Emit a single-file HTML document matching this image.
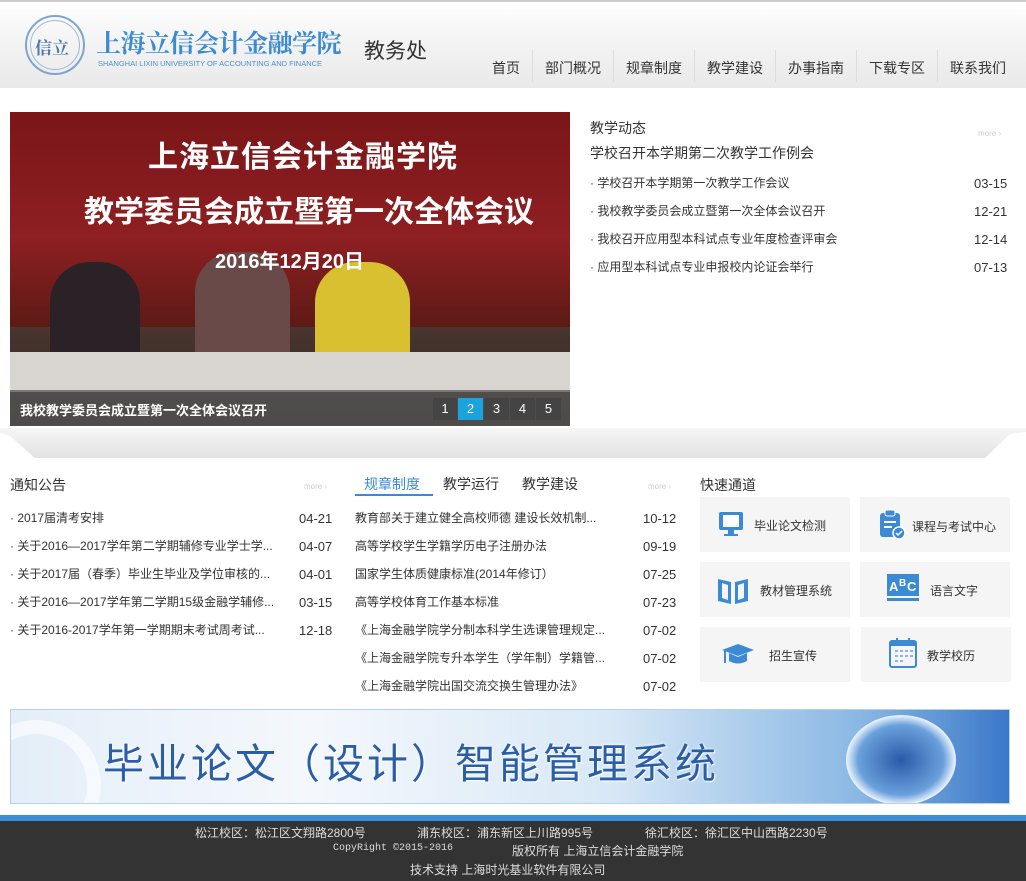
<!DOCTYPE html>
<html><head><meta charset="utf-8"><style>
*{margin:0;padding:0;box-sizing:border-box}
body{width:1026px;height:881px;overflow:hidden;background:#fff;font-family:"Liberation Sans","Noto Sans CJK SC",sans-serif;color:#333;position:relative}
.a{position:absolute}
.hdr{left:0;top:0;width:1026px;height:88px;background:linear-gradient(#fff,#f5f5f5 40%,#e9e9e9);border-top:2px solid #ccc}
.nav{top:58px;font-size:14px;color:#333}
.nav span{position:absolute;white-space:nowrap}
.sep{position:absolute;top:50px;width:1px;height:32px;background:#ddd}
.li{font-size:12px;white-space:nowrap}
.d{font-size:13px;white-space:nowrap;margin-top:2px}
.more{font-size:8px;color:#ccc}
.qb{background:#f5f5f5;width:150px;height:55px;font-size:12px;color:#333}
.qb span{position:absolute;top:20px}
</style></head><body>
<div class="a hdr"></div>
<div class="a" style="left:25px;top:15px;width:60px;height:60px;border-radius:50%;border:2px solid #7fa5cf;"></div>
<div class="a" style="left:30px;top:20px;width:50px;height:50px;border-radius:50%;border:1px solid #9bb8d9;"></div>
<div class="a" style="left:35px;top:34px;font-size:17px;color:#4a78b0;font-family:'Noto Serif CJK SC',serif;font-weight:bold">信立</div>
<div class="a" style="left:96px;top:27px;font-size:25px;line-height:30px;color:#3b8ad3;font-family:'Noto Serif CJK SC',serif;letter-spacing:-0.5px;font-weight:bold;white-space:nowrap">上海立信会计金融学院</div>
<div class="a" style="left:98px;top:59px;font-size:7.5px;color:#4a90d0;white-space:nowrap">SHANGHAI LIXIN UNIVERSITY OF ACCOUNTING AND FINANCE</div>
<div class="a" style="left:364px;top:35px;font-size:21px;color:#333">教务处</div>
<div class="a nav" style="left:0;top:0">
<span style="left:492px;top:58px">首页</span>
<span style="left:545px;top:58px">部门概况</span>
<span style="left:626px;top:58px">规章制度</span>
<span style="left:707px;top:58px">教学建设</span>
<span style="left:788px;top:58px">办事指南</span>
<span style="left:869px;top:58px">下载专区</span>
<span style="left:950px;top:58px">联系我们</span>
</div>
<div class="sep" style="left:532px"></div><div class="sep" style="left:613px"></div><div class="sep" style="left:694px"></div><div class="sep" style="left:775px"></div><div class="sep" style="left:856px"></div><div class="sep" style="left:937px"></div>

<div class="a" style="left:10px;top:112px;width:560px;height:314px;overflow:hidden;background:linear-gradient(#7a1618,#8e1f22 40%,#5a1a14 70%,#3a2a20)">
 <div class="a" style="left:0;top:215px;width:560px;height:100px;background:linear-gradient(#4a3530,#2a2520)"></div>
 <div class="a" style="left:40px;top:150px;width:90px;height:110px;border-radius:40px 40px 0 0;background:#2a2226"></div>
 <div class="a" style="left:185px;top:140px;width:95px;height:120px;border-radius:40px 40px 0 0;background:#6a4a48"></div>
 <div class="a" style="left:305px;top:150px;width:95px;height:110px;border-radius:40px 40px 0 0;background:#d8c030"></div>
 <div class="a" style="left:0;top:240px;width:560px;height:40px;background:#d8d4d0"></div>
 <div class="a" style="left:0;top:278px;width:560px;height:36px;background:rgba(90,90,90,.75)"></div>
 <div class="a" style="left:138px;top:20px;font-size:30px;color:#fff;font-weight:bold;font-family:'Noto Sans CJK SC',sans-serif;letter-spacing:1px">上海立信会计金融学院</div>
 <div class="a" style="left:74px;top:75px;font-size:30px;color:#fff;font-weight:bold;font-family:'Noto Sans CJK SC',sans-serif">教学委员会成立暨第一次全体会议</div>
 <div class="a" style="left:205px;top:133px;font-size:20px;color:#fff;font-weight:bold">2016年12月20日</div>
 <div class="a" style="left:10px;top:288px;font-size:13px;color:#fff;font-weight:bold">我校教学委员会成立暨第一次全体会议召开</div>
 <div class="a" style="left:423px;top:286px;display:flex;gap:1px;font-size:13px;color:#fff">
  <span style="width:24px;height:22px;background:#444;text-align:center;line-height:22px">1</span>
  <span style="width:25px;height:22px;background:#1ba3dd;text-align:center;line-height:22px">2</span>
  <span style="width:25px;height:22px;background:#444;text-align:center;line-height:22px">3</span>
  <span style="width:25px;height:22px;background:#444;text-align:center;line-height:22px">4</span>
  <span style="width:25px;height:22px;background:#444;text-align:center;line-height:22px">5</span>
 </div>
</div>

<div class="a" style="left:590px;top:118px;font-size:14px">教学动态</div>
<div class="a more" style="left:978px;top:129px">more ›</div>
<div class="a" style="left:590px;top:143px;font-size:14px">学校召开本学期第二次教学工作例会</div>
<div class="a li" style="left:590px;top:174px">· 学校召开本学期第一次教学工作会议</div><div class="a d" style="left:974px;top:174px">03-15</div>
<div class="a li" style="left:590px;top:202px">· 我校教学委员会成立暨第一次全体会议召开</div><div class="a d" style="left:974px;top:202px">12-21</div>
<div class="a li" style="left:590px;top:230px">· 我校召开应用型本科试点专业年度检查评审会</div><div class="a d" style="left:974px;top:230px">12-14</div>
<div class="a li" style="left:590px;top:258px">· 应用型本科试点专业申报校内论证会举行</div><div class="a d" style="left:974px;top:258px">07-13</div>

<svg class="a" style="left:0;top:428px" width="1026" height="34"><defs><linearGradient id="g" x1="0" y1="0" x2="0" y2="1"><stop offset="0" stop-color="#f6f6f6"/><stop offset="1" stop-color="#e2e2e2"/></linearGradient></defs>
<path d="M0 5 L10 8 L35 30 L985 30 L1010 6 L1026 4 L1026 0 L0 0Z" fill="url(#g)"/></svg>

<div class="a" style="left:10px;top:475px;font-size:14px">通知公告</div>
<div class="a more" style="left:304px;top:482px">more ›</div>
<div class="a li" style="left:10px;top:509px">· 2017届清考安排</div><div class="a d" style="left:299px;top:509px">04-21</div>
<div class="a li" style="left:10px;top:537px">· 关于2016—2017学年第二学期辅修专业学士学...</div><div class="a d" style="left:299px;top:537px">04-07</div>
<div class="a li" style="left:10px;top:565px">· 关于2017届（春季）毕业生毕业及学位审核的...</div><div class="a d" style="left:299px;top:565px">04-01</div>
<div class="a li" style="left:10px;top:593px">· 关于2016—2017学年第二学期15级金融学辅修...</div><div class="a d" style="left:299px;top:593px">03-15</div>
<div class="a li" style="left:10px;top:621px">· 关于2016-2017学年第一学期期末考试周考试...</div><div class="a d" style="left:299px;top:621px">12-18</div>

<div class="a" style="left:364px;top:474px;font-size:14px;color:#3b8ad3">规章制度</div>
<div class="a" style="left:355px;top:494px;width:78px;height:2px;background:#3b8ad3"></div>
<div class="a" style="left:443px;top:474px;font-size:14px">教学运行</div>
<div class="a" style="left:522px;top:474px;font-size:14px">教学建设</div>
<div class="a more" style="left:648px;top:482px">more ›</div>
<div class="a li" style="left:355px;top:509px">教育部关于建立健全高校师德 建设长效机制...</div><div class="a d" style="left:643px;top:509px">10-12</div>
<div class="a li" style="left:355px;top:537px">高等学校学生学籍学历电子注册办法</div><div class="a d" style="left:643px;top:537px">09-19</div>
<div class="a li" style="left:355px;top:565px">国家学生体质健康标准(2014年修订）</div><div class="a d" style="left:643px;top:565px">07-25</div>
<div class="a li" style="left:355px;top:593px">高等学校体育工作基本标准</div><div class="a d" style="left:643px;top:593px">07-23</div>
<div class="a li" style="left:355px;top:621px">《上海金融学院学分制本科学生选课管理规定...</div><div class="a d" style="left:643px;top:621px">07-02</div>
<div class="a li" style="left:355px;top:649px">《上海金融学院专升本学生（学年制）学籍管...</div><div class="a d" style="left:643px;top:649px">07-02</div>
<div class="a li" style="left:355px;top:677px">《上海金融学院出国交流交换生管理办法》</div><div class="a d" style="left:643px;top:677px">07-02</div>

<div class="a" style="left:700px;top:475px;font-size:14px">快速通道</div>
<div class="a qb" style="left:700px;top:497px"><svg class="a" style="left:18px;top:14px" width="26" height="26"><rect x="1" y="1" width="24" height="18" rx="2" fill="#3b8ad3"/><rect x="5" y="4" width="16" height="12" fill="#fff"/><rect x="10" y="19" width="6" height="4" fill="#3b8ad3"/><rect x="6" y="23" width="14" height="2" fill="#3b8ad3"/></svg><span style="left:54px">毕业论文检测</span></div>
<div class="a qb" style="left:860px;top:497px"><svg class="a" style="left:18px;top:12px" width="28" height="32"><rect x="2" y="4" width="20" height="24" rx="3" fill="#3b8ad3"/><rect x="7" y="1" width="10" height="6" rx="2" fill="#3b8ad3" stroke="#fff"/><rect x="6" y="12" width="12" height="2" fill="#fff"/><rect x="6" y="17" width="8" height="2" fill="#fff"/><circle cx="21" cy="24" r="6" fill="#3b8ad3" stroke="#fff" stroke-width="1.5"/><path d="M18 24l2 2 4-4" stroke="#fff" stroke-width="1.5" fill="none"/></svg><span style="left:52px;top:21px">课程与考试中心</span></div>
<div class="a qb" style="left:700px;top:562px"><svg class="a" style="left:16px;top:14px" width="34" height="30"><path d="M2 3 L15 6 L15 28 L2 25Z M32 3 L19 6 L19 28 L32 25Z" fill="#3b8ad3"/><path d="M6 7 L12 9 L12 24 L6 22Z M28 7 L22 9 L22 24 L28 22Z" fill="#f5f5f5"/></svg><span style="left:60px">教材管理系统</span></div>
<div class="a qb" style="left:860px;top:562px"><svg class="a" style="left:27px;top:12px" width="32" height="28"><rect x="0" y="0" width="32" height="22" fill="#3b8ad3"/><rect x="0" y="24" width="32" height="3" fill="#3b8ad3"/><text x="2" y="17" font-size="13" fill="#fff" font-family="Liberation Sans" font-weight="bold">A</text><text x="12" y="12" font-size="10" fill="#fff" font-family="Liberation Sans" font-weight="bold">B</text><text x="20" y="17" font-size="13" fill="#fff" font-family="Liberation Sans" font-weight="bold">C</text></svg><span style="left:70px">语言文字</span></div>
<div class="a qb" style="left:700px;top:627px"><svg class="a" style="left:20px;top:14px" width="36" height="28"><path d="M2 9 L18 3 L34 9 L18 15Z" fill="#3b8ad3"/><path d="M9 12 L9 20 Q18 25 27 20 L27 12 L18 16Z" fill="#3b8ad3"/><path d="M5 10 L5 22" stroke="#3b8ad3" stroke-width="2"/></svg><span style="left:69px">招生宣传</span></div>
<div class="a qb" style="left:861px;top:627px"><svg class="a" style="left:27px;top:10px" width="30" height="32"><rect x="2" y="4" width="26" height="26" rx="2" fill="none" stroke="#3b8ad3" stroke-width="2"/><rect x="2" y="4" width="26" height="5" fill="#3b8ad3"/><rect x="8" y="1" width="2" height="7" fill="#3b8ad3"/><rect x="20" y="1" width="2" height="7" fill="#3b8ad3"/><g fill="#8ab8e6"><rect x="7" y="13" width="3" height="2"/><rect x="12" y="13" width="3" height="2"/><rect x="17" y="13" width="3" height="2"/><rect x="22" y="13" width="3" height="2"/><rect x="7" y="18" width="3" height="2"/><rect x="12" y="18" width="3" height="2"/><rect x="17" y="18" width="3" height="2"/><rect x="22" y="18" width="3" height="2"/><rect x="7" y="23" width="3" height="2"/><rect x="12" y="23" width="3" height="2"/></g></svg><span style="left:66px">教学校历</span></div>

<div class="a" style="left:10px;top:709px;width:1000px;height:95px;border:1px solid #b8d0e8;overflow:hidden;background:linear-gradient(90deg,#e4eef8,#f4f8fc 30%,#d8e8f6 60%,#8ab8e4 85%,#3a78c8)">
 <div class="a" style="left:-40px;top:10px;width:130px;height:130px;border-radius:50%;border:14px solid rgba(255,255,255,.6)"></div>
 <div class="a" style="left:835px;top:5px;width:110px;height:90px;border-radius:50%;background:radial-gradient(#2a5aa8,#6aa0dc 55%,#e8f2fc 70%,#4a88d0 85%)"></div>
 <div class="a" style="left:92px;top:20px;font-size:41px;color:#2a5ea8;font-family:'Noto Sans CJK SC',sans-serif;letter-spacing:3px;white-space:nowrap;text-shadow:0 0 3px #fff,1px 1px 0 #fff">毕业论文（设计）智能管理系统</div>
</div>

<div class="a" style="left:0;top:815px;width:1026px;height:6px;background:#3a8fd6"></div>
<div class="a" style="left:0;top:821px;width:1026px;height:60px;background:#333;color:#ddd;font-size:12px">
 <div class="a" style="left:195px;top:3px;white-space:nowrap">松江校区：松江区文翔路2800号</div>
 <div class="a" style="left:417px;top:3px;white-space:nowrap">浦东校区：浦东新区上川路995号</div>
 <div class="a" style="left:645px;top:3px;white-space:nowrap">徐汇校区：徐汇区中山西路2230号</div>
 <div class="a" style="left:333px;top:22px;white-space:nowrap;font-family:'Liberation Mono',monospace;font-size:10px">CopyRight ©2015-2016</div>
 <div class="a" style="left:512px;top:21px;white-space:nowrap">版权所有 上海立信会计金融学院</div>
 <div class="a" style="left:410px;top:40px;white-space:nowrap">技术支持 上海时光基业软件有限公司</div>
</div>
</body></html>
